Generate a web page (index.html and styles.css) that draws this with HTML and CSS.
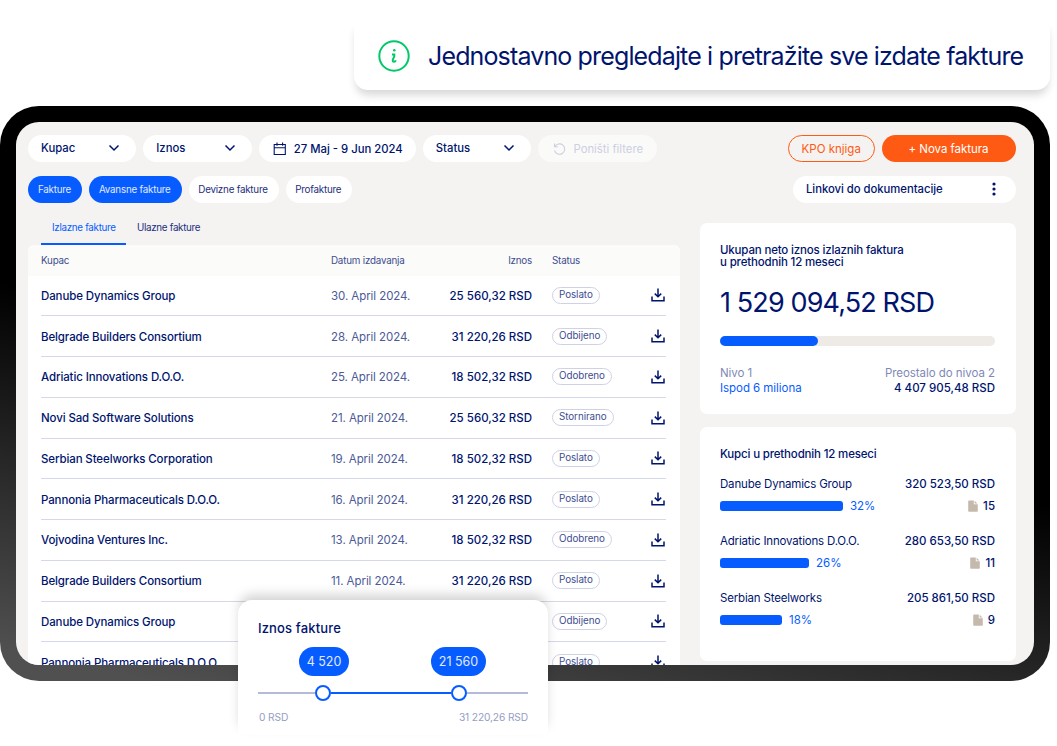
FILE: index.html
```html
<!DOCTYPE html>
<html lang="sr">
<head>
<meta charset="UTF-8">
<title>Fakture</title>
<link rel="stylesheet" href="styles.css">
</head>
<body>
<svg class="defs">
    <symbol id="chevron" viewBox="0 0 12 8"><path d="M1.5 1.5L6 6l4.500-4.500"/></symbol>
    <symbol id="download" viewBox="0 0 14 14"><path d="M7 0.500v8M3.800 5.600L7 8.800l3.200-3.200M1 8.500v4.200h12V8.500"/></symbol>
    <symbol id="file" viewBox="0 0 10 12"><path d="M1 0.500h4.800v3.700h4V11a0.800 0.800 0 0 1-0.800 0.800H1A0.800 0.800 0 0 1 0.200 11V1.300A0.800 0.800 0 0 1 1 0.500z"/><path d="M6.600 0.700l2.900 2.800H6.600z"/></symbol>
</svg>

<div class="banner">
    <svg class="info" viewBox="0 0 32 32">
        <circle cx="16" cy="16" r="14.700"/>
        <path d="M14 14.500h2.300v1.500q-.2 1-.9 2.200t-.7 2.200q0 1.300 1.300 1.300 1.400 0 1.900-1.300"/>
        <circle class="dot" cx="16.300" cy="10.300" r="1.300"/>
    </svg>
    <span class="banner-text">Jednostavno pregledajte i pretražite sve izdate fakture</span>
</div>

<div class="device">
    <div class="screen">
        <div class="bar">
            <div class="select">Kupac <svg class="chevron"><use href="#chevron"/></svg></div>
            <div class="select">Iznos <svg class="chevron"><use href="#chevron"/></svg></div>
            <div class="select date">
                <svg class="calendar" viewBox="0 0 14 14"><path d="M1.200 2.500h11.100v10H1.200zM1.200 5.700h11.100M4 .5v3.200M9.600 .5v3.200"/></svg>
                <span>27 Maj - 9 Jun 2024</span>
            </div>
            <div class="select">Status <svg class="chevron"><use href="#chevron"/></svg></div>
            <div class="select reset">
                <svg class="undo" viewBox="0 0 14 14"><path d="M1.500 1.500v3.300h3.300M1.800 4.800a5.200 5.200 0 1 1-.3 3.700"/></svg>
                <span>Poništi filtere</span>
            </div>
            <div class="btn outline">KPO knjiga</div>
            <div class="btn full">+ Nova faktura</div>
        </div>
        <div class="bar second">
            <div class="chip active">Fakture</div>
            <div class="chip active avans">Avansne fakture</div>
            <div class="chip deviz">Devizne fakture</div>
            <div class="chip prof">Profakture</div>
            <div class="select links">Linkovi do dokumentacije <svg class="dots" viewBox="0 0 4 14"><circle cx="2" cy="2" r="1.600"/><circle cx="2" cy="7" r="1.600"/><circle cx="2" cy="12" r="1.600"/></svg></div>
        </div>

        <div class="content">
            <div class="left">
                <div class="tabs">
                    <div class="tab current">Izlazne fakture</div>
                    <div class="tab">Ulazne fakture</div>
                </div>
                <div class="table">
                    <div class="row head"><span>Kupac</span><span>Datum izdavanja</span><span class="right">Iznos</span><span class="status">Status</span></div>
                    <div class="rows">
                        <div class="row"><span class="name">Danube Dynamics Group</span><span class="when">30. April 2024.</span><span class="sum">25 560,32 RSD</span><span class="status"><span class="badge">Poslato</span></span><svg class="download"><use href="#download"/></svg></div>
                        <div class="row"><span class="name">Belgrade Builders Consortium</span><span class="when">28. April 2024.</span><span class="sum">31 220,26 RSD</span><span class="status"><span class="badge">Odbijeno</span></span><svg class="download"><use href="#download"/></svg></div>
                        <div class="row"><span class="name">Adriatic Innovations D.O.O.</span><span class="when">25. April 2024.</span><span class="sum">18 502,32 RSD</span><span class="status"><span class="badge">Odobreno</span></span><svg class="download"><use href="#download"/></svg></div>
                        <div class="row"><span class="name">Novi Sad Software Solutions</span><span class="when">21. April 2024.</span><span class="sum">25 560,32 RSD</span><span class="status"><span class="badge">Stornirano</span></span><svg class="download"><use href="#download"/></svg></div>
                        <div class="row"><span class="name">Serbian Steelworks Corporation</span><span class="when">19. April 2024.</span><span class="sum">18 502,32 RSD</span><span class="status"><span class="badge">Poslato</span></span><svg class="download"><use href="#download"/></svg></div>
                        <div class="row"><span class="name">Pannonia Pharmaceuticals D.O.O.</span><span class="when">16. April 2024.</span><span class="sum">31 220,26 RSD</span><span class="status"><span class="badge">Poslato</span></span><svg class="download"><use href="#download"/></svg></div>
                        <div class="row"><span class="name">Vojvodina Ventures Inc.</span><span class="when">13. April 2024.</span><span class="sum">18 502,32 RSD</span><span class="status"><span class="badge">Odobreno</span></span><svg class="download"><use href="#download"/></svg></div>
                        <div class="row"><span class="name">Belgrade Builders Consortium</span><span class="when">11. April 2024.</span><span class="sum">31 220,26 RSD</span><span class="status"><span class="badge">Poslato</span></span><svg class="download"><use href="#download"/></svg></div>
                        <div class="row"><span class="name">Danube Dynamics Group</span><span></span><span></span><span class="status"><span class="badge">Odbijeno</span></span><svg class="download"><use href="#download"/></svg></div>
                        <div class="row"><span class="name">Pannonia Pharmaceuticals D.O.O.</span><span></span><span></span><span class="status"><span class="badge">Poslato</span></span><svg class="download"><use href="#download"/></svg></div>
                    </div>
                </div>
            </div>

            <div class="side">
                <div class="card total">
                    <div class="title">Ukupan neto iznos izlaznih faktura<br>u prethodnih 12 meseci</div>
                    <div class="amount">1 529 094,52 RSD</div>
                    <div class="progress"><div class="fill"></div></div>
                    <div class="pair muted"><span>Nivo 1</span><span>Preostalo do nivoa 2</span></div>
                    <div class="pair"><span class="blue">Ispod 6 miliona</span><span class="value">4 407 905,48 RSD</span></div>
                </div>
                <div class="card buyers">
                    <div class="title">Kupci u prethodnih 12 meseci</div>
                    <div class="buyer">
                        <div class="pair"><span>Danube Dynamics Group</span><span class="value">320 523,50 RSD</span></div>
                        <div class="share"><div class="meter" style="width: 123px"></div><span class="blue">32%</span><svg class="file"><use href="#file"/></svg><span class="value">15</span></div>
                    </div>
                    <div class="buyer">
                        <div class="pair"><span>Adriatic Innovations D.O.O.</span><span class="value">280 653,50 RSD</span></div>
                        <div class="share"><div class="meter" style="width: 89px"></div><span class="blue">26%</span><svg class="file"><use href="#file"/></svg><span class="value">11</span></div>
                    </div>
                    <div class="buyer">
                        <div class="pair"><span>Serbian Steelworks</span><span class="value">205 861,50 RSD</span></div>
                        <div class="share"><div class="meter" style="width: 62px"></div><span class="blue">18%</span><svg class="file"><use href="#file"/></svg><span class="value">9</span></div>
                    </div>
                </div>
            </div>
        </div>
    </div>
</div>

<div class="range">
    <div class="range-title">Iznos fakture</div>
    <div class="bubbles"><span class="bubble">4 520</span><span class="bubble second-bubble">21 560</span></div>
    <div class="slider"><div class="line"></div><div class="knob"></div><div class="line on"></div><div class="knob"></div><div class="line end"></div></div>
    <div class="limits"><span>0 RSD</span><span>31 220,26 RSD</span></div>
</div>
</body>
</html>
```
FILE: styles.css
```css
* {
    box-sizing: border-box;
}
body {
    margin: 0;
    width: 1057px;
    height: 746px;
    overflow: hidden;
    position: relative;
    background: #fff;
    color: #00146e;
    font-family: Inter, "Liberation Sans", sans-serif;
    font-size: 11.5px;
    white-space: nowrap;
}
.defs {
    display: none;
}
svg {
    display: block;
    fill: none;
    stroke: #00146e;
    stroke-width: 1.5;
    flex: none;
}

/* banner */
.banner {
    display: flex;
    align-items: center;
    gap: 18px;
    width: 696px;
    height: 68px;
    margin: 22px 0 0 354px;
    padding-left: 24px;
    border-radius: 0 0 14px 14px;
    box-shadow: 0 7px 8px -2px rgba(0,0,0,0.16);
}
.info {
    width: 32px;
    height: 32px;
    stroke: #00c968;
    stroke-width: 2;
}
.info .dot {
    fill: #00c968;
    stroke: none;
}
.banner-text {
    font-size: 25px;
    letter-spacing: -0.86px;
}

/* device */
.device {
    width: 1050px;
    height: 575px;
    margin-top: 16px;
    padding: 16px;
    border-radius: 39px;
    background: linear-gradient(192deg, #000 50%, #505050 96%);
}
.screen {
    height: 543px;
    padding: 13px 18px 0 12px;
    border-radius: 23px;
    background: #f4f3f1;
    overflow: hidden;
}
.bar {
    display: flex;
    gap: 7px;
}
.second {
    margin-top: 14px;
}
.select {
    display: flex;
    align-items: center;
    justify-content: space-between;
    width: 108.300px;
    height: 27px;
    padding: 0 16px 1px 13px;
    border-radius: 14px;
    background: #fff;
    font-weight: 450;
    font-size: 11.300px;
}
.chevron {
    width: 12px;
    height: 8px;
}
.date {
    width: 157.200px;
    padding: 0 13px 0 14px;
}
.calendar {
    width: 14px;
    height: 14px;
    stroke-width: 1.1;
}
.reset {
    width: 119px;
    padding: 0 14px 0 15px;
    background: #fafaf9;
    color: #cccfe2;
    font-weight: 400;
}
.undo {
    width: 14px;
    height: 14px;
    stroke: #cccfe2;
    stroke-width: 1.1;
}
.btn {
    display: flex;
    align-items: center;
    justify-content: center;
    height: 27px;
    border-radius: 14px;
    font-size: 11.5px;
}
.outline {
    width: 87.500px;
    margin-left: auto;
    border: 1px solid #ff5a14;
    color: #ff5a14;
}
.full {
    width: 134px;
    padding-right: 1px;
    background: #ff5a14;
    color: #fff;
    letter-spacing: -0.05px;
}
.chip {
    display: flex;
    align-items: center;
    justify-content: center;
    width: 54px;
    height: 27px;
    padding: 0 1px 1px 0;
    border-radius: 14px;
    background: #fff;
    font-size: 9.800px;
    letter-spacing: -0.22px;
    color: #1c2e7e;
}
.active {
    background: #075cff;
    color: #e0eaff;
}
.avans {
    width: 92.500px;
}
.deviz {
    width: 90px;
}
.prof {
    width: 66.500px;
}
.links {
    width: 223px;
    margin-left: auto;
    padding-right: 20px;
    letter-spacing: -0.03px;
}
.dots {
    width: 4px;
    height: 14px;
    fill: #00146e;
    stroke: none;
}

.content {
    display: flex;
    gap: 20px;
}
.left {
    width: 652px;
}
.tabs {
    display: flex;
    height: 42px;
    padding: 8px 13px 0;
    font-size: 9.800px;
    color: #1c2e7e;
}
.tab {
    padding: 0 11px;
    line-height: 34px;
    letter-spacing: -0.3px;
}
.current {
    width: 85px;
    color: #075cff;
    border-bottom: 2px solid #075cff;
}

/* table */
.table {
    border-radius: 6px 6px 0 0;
    background: #fff;
}
.row {
    display: grid;
    grid-template-columns: 290px 90px 111px 118.500px 14px;
    align-items: center;
    height: 40.750px;
    border-bottom: 1px solid #d5d8e8;
}
.head {
    height: 30.500px;
    padding: 0 13px;
    border: 0;
    border-radius: 6px 6px 0 0;
    background: #fbfbf9;
    font-size: 9.800px;
    letter-spacing: -0.2px;
    color: #3e4d90;
}
.rows {
    padding: 0 14px 0 13px;
}
.right, .sum {
    text-align: right;
}
.status {
    padding-left: 20px;
}
.name, .when, .sum {
    padding-top: 1px;
}
.name {
    font-weight: 450;
    letter-spacing: -0.12px;
}
.when {
    color: #4c5a97;
    letter-spacing: -0.07px;
}
.sum, .value {
    font-weight: 500;
}
.badge {
    display: inline-block;
    height: 17px;
    padding: 0 6px;
    border: 1px solid #cfd2e5;
    border-radius: 9px;
    font-size: 9.800px;
    line-height: 14px;
    letter-spacing: -0.05px;
    color: #3e4d90;
}
.download {
    width: 14px;
    height: 14px;
}

/* right column */
.side {
    width: 316px;
    padding-top: 20px;
}
.card {
    padding: 21px 21px 0 20px;
    border-radius: 7px;
    background: #fff;
}
.total {
    height: 191px;
}
.title {
    font-weight: 450;
    line-height: 12px;
    letter-spacing: -0.17px;
}
.amount {
    margin-top: 17px;
    font-size: 27px;
    line-height: 36px;
    letter-spacing: -0.88px;
}
.progress {
    height: 10px;
    margin-top: 15px;
    border-radius: 5px;
    background: #eeeae5;
}
.fill {
    width: 98px;
    height: 10px;
    border-radius: 5px;
    background: #075cff;
}
.pair {
    display: flex;
    justify-content: space-between;
    line-height: 15.500px;
    letter-spacing: -0.05px;
}
.pair .value {
    letter-spacing: 0;
}
.muted {
    margin-top: 20px;
    line-height: 15px;
    color: #8089b6;
}
.blue {
    color: #075cff;
}
.buyers {
    height: 234px;
    margin-top: 13px;
}
.buyer {
    margin-top: 16px;
    height: 40.750px;
}
.buyers .title {
    margin-bottom: 17px;
}
.buyers .title + .buyer {
    margin-top: 0;
}
.buyer .pair {
    letter-spacing: -0.18px;
}
.share {
    display: flex;
    align-items: center;
    margin-top: 6px;
    height: 15px;
}
.meter {
    height: 10px;
    margin-right: 7px;
    border-radius: 3px;
    background: #075cff;
}
.file {
    width: 10px;
    height: 12px;
    margin: 0 5px 0 auto;
    fill: #c5b9ad;
    stroke: none;
}

/* popup with the amount range */
.range {
    position: absolute;
    left: 238px;
    top: 600px;
    width: 310px;
    height: 135px;
    padding: 20px 20px 0;
    border-radius: 14px 14px 0 0;
    background: #fff;
    box-shadow: 0 -7px 12px -2px rgba(0,0,0,0.18);
}
.range-title {
    font-size: 13px;
    font-weight: 450;
    line-height: 17px;
    letter-spacing: 0.15px;
}
.bubbles {
    display: flex;
    padding: 10px 0 0 41px;
}
.bubble {
    width: 50px;
    height: 29px;
    border-radius: 15px;
    background: #075cff;
    color: #e0eaff;
    font-size: 12.500px;
    line-height: 29px;
    text-align: center;
}
.second-bubble {
    width: 55px;
    margin-left: 82px;
}
.slider {
    display: flex;
    align-items: center;
    height: 17px;
    margin-top: 8px;
}
.line {
    width: 57px;
    height: 2px;
    background: #b3bbd9;
}
.on {
    width: 120px;
    background: #075cff;
}
.end {
    width: 61px;
}
.knob {
    width: 16px;
    height: 16px;
    border: 2px solid #075cff;
    border-radius: 50%;
    background: #fff;
}
.limits {
    display: flex;
    justify-content: space-between;
    margin-top: 10px;
    padding: 0 0 0 1px;
    color: #959dc3;
    font-size: 10.200px;
    letter-spacing: -0.12px;
}
```
